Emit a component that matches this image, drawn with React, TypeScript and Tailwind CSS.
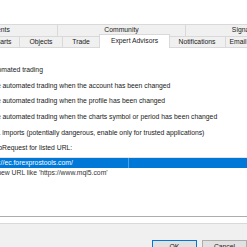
import { Check } from 'lucide-react';

type Tab = { label: string; w: string; active?: boolean };

const topRow: Tab[] = [
    { label: 'Events', w: 'w-[117px]' },
    { label: 'Community', w: 'w-[128px]' },
    { label: 'Signals', w: 'w-[115px]' },
];

const bottomRow: Tab[] = [
    { label: 'Server', w: 'w-[43px]' },
    { label: 'Charts', w: 'w-[36px]' },
    { label: 'Objects', w: 'w-[43px]' },
    { label: 'Trade', w: 'w-[37px]' },
    { label: 'Expert Advisors', w: 'w-[71px]', active: true },
    { label: 'Notifications', w: 'w-[57px]' },
    { label: 'Email', w: 'w-[25px]' },
    { label: 'FTP', w: 'w-[50px]' },
];

const options = [
    { text: 'Allow automated trading', checked: true, indent: false, h: 'h-[16px]' },
    { text: 'Disable automated trading when the account has been changed', checked: false, indent: true, h: 'h-[16px]' },
    { text: 'Disable automated trading when the profile has been changed', checked: false, indent: true, h: 'h-[15px]' },
    { text: 'Disable automated trading when the charts symbol or period has been changed', checked: false, indent: true, h: 'h-[16px]' },
    { text: 'Allow DLL imports (potentially dangerous, enable only for trusted applications)', checked: false, indent: false, h: 'h-[16px]' },
    { text: 'Allow WebRequest for listed URL:', checked: true, indent: false, h: 'h-[15px]' },
];

function CheckBox({ checked }: { checked: boolean }) {
    return (
        <span className="flex h-[7px] w-[7px] shrink-0 items-center justify-center border border-[#333] bg-white">
            {checked && <Check size={6} strokeWidth={3} className="text-[#333]" />}
        </span>
    );
}

export default function App() {
    return (
        <div className="h-[247px] w-[247px] overflow-hidden bg-[#f0f0f0] font-['Liberation_Sans',Arial,sans-serif] text-[6.8px] leading-none text-[#1a1a1a]">
            {/* window title bar remnant */}
            <div className="h-[24px] bg-white" />

            <div className="ml-[-59px] w-[360px]">
                {/* back row of tabs */}
                <div className="flex h-[12px]">
                    {topRow.map((t, i) => (
                        <div
                            key={t.label}
                            className={`${t.w} flex shrink-0 items-center justify-center border-t border-r border-[#d9d9d9] bg-[#f0f0f0] ${i === 0 ? 'border-l' : ''}`}
                        >
                            {t.label}
                        </div>
                    ))}
                </div>

                {/* front row of tabs */}
                <div className="flex h-[11px]">
                    {bottomRow.map((t, i) =>
                        t.active ? (
                            <div
                                key={t.label}
                                className={`${t.w} relative z-10 -mx-px -mt-[2px] flex h-[14px] shrink-0 items-start justify-center border-x border-t border-[#d9d9d9] bg-white pt-[3px]`}
                            >
                                {t.label}
                            </div>
                        ) : (
                            <div
                                key={t.label}
                                className={`${t.w} flex shrink-0 items-center justify-center border-t border-r border-[#d9d9d9] bg-[#f0f0f0] ${i === 0 ? 'border-l' : ''}`}
                            >
                                {t.label}
                            </div>
                        )
                    )}
                </div>

                {/* tab page */}
                <div className="h-[177px] border border-[#d9d9d9] bg-white pl-[16px] pt-[14px]">
                    {options.map(o => (
                        <div key={o.text} className={`${o.h} flex items-center gap-[5px] whitespace-nowrap ${o.indent ? 'pl-[8px]' : ''}`}>
                            <CheckBox checked={o.checked} />
                            <span>{o.text}</span>
                        </div>
                    ))}

                    <div className="ml-[21px] mt-px h-[60px] w-[300px] border border-[#adadad] border-t-[#e3e3e3] bg-white">
                        <div className="flex h-[10px] bg-[#0078d7] text-white">
                            <div className="flex w-[149px] items-center border-r border-[#4d9fe3] pl-[4px]">
                                https://ec.forexprostools.com/
                            </div>
                            <div className="flex-1" />
                        </div>
                        <div className="flex h-[10px] items-center pl-[4px] text-[#333]">
                            add new URL like 'https://www.mql5.com'
                        </div>
                    </div>
                </div>
            </div>

            <div className="flex gap-[5px] pl-[152px] pt-[16px]">
                <button className="flex h-[14px] w-[48px] items-center justify-center border border-[#0078d7] bg-[#e1e1e1]">
                    OK
                </button>
                <button className="flex h-[14px] w-[48px] items-center justify-center border border-[#adadad] bg-[#e1e1e1]">
                    Cancel
                </button>
            </div>
        </div>
    );
}
